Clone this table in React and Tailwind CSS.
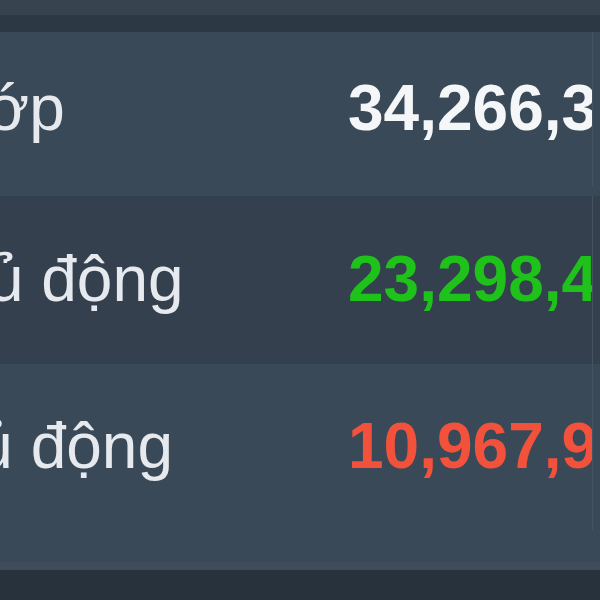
const rows = [
  { label: "Tổng khớp", value: "34,266,300", color: "text-[#f4f6f8]", bg: "bg-[#3a4957]", h: "h-[164px]", pad: "pb-[10px]", shift: "ml-[-22px]" },
  { label: "Mua chủ động", value: "23,298,400", color: "text-[#1ec21a]", bg: "bg-[#35404e]", h: "h-[168px]", pad: "", shift: "" },
  { label: "Bán chủ động", value: "10,967,900", color: "text-[#f2513c]", bg: "bg-[#3a4957]", h: "h-[166px]", pad: "", shift: "" },
];

const App = () => {
  return (
    <div
      className="w-[600px] h-[600px] overflow-hidden flex flex-col bg-[#3a4957]"
      style={{ fontFamily: '"Liberation Sans", Arial, sans-serif' }}
    >
      {/* header edge */}
      <div className="h-[15px] bg-[#37444f]" />
      <div className="h-[17px] bg-[#2c3844]" />

      {rows.map((r, i) => (
        <div key={i} className={`flex items-center ${r.h} ${r.pad} ${r.bg} ml-[-222px]`}>
          <div className="w-[570px] shrink-0 overflow-hidden text-[64px] leading-[1.3] text-[#e6eaee] whitespace-nowrap">
            <div className={r.shift}>{r.label}</div>
          </div>
          <div
            className={`w-[244px] shrink-0 overflow-hidden text-[64px] leading-[1.3] font-bold whitespace-nowrap ${r.color}`}
          >
            {r.value}
          </div>
          <div className="self-stretch w-px bg-[#46545f]" />
        </div>
      ))}

      {/* table bottom */}
      <div className="flex-1 flex flex-col">
        <div className="flex-1" />
        <div className="h-[8px] bg-[#3f4d5a]" />
        <div className="h-[30px] bg-[#27323c]" />
      </div>
    </div>
  );
};

export default App;
